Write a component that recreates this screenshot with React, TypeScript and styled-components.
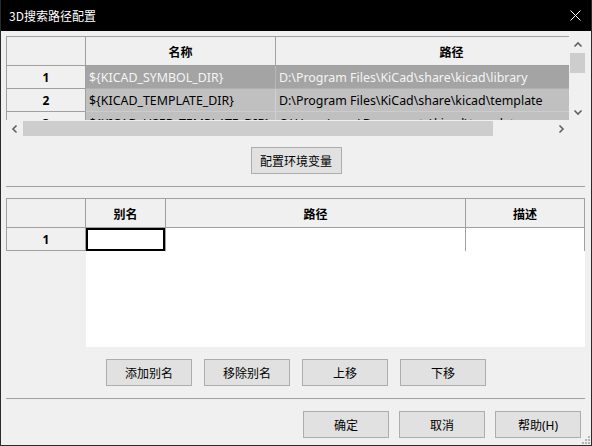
import styled, { createGlobalStyle } from "styled-components";

const GlobalStyle = createGlobalStyle`
  html, body {
    margin: 0;
    padding: 0;
    background: #f0f0f0;
  }
  body {
    font-family: "Noto Sans", "Noto Sans CJK SC", sans-serif;
    font-size: 12px;
    color: #000;
  }
`;

type PathRow = { name: string; path: string; selected?: boolean };

const envPaths: PathRow[] = [
  { name: "${KICAD_SYMBOL_DIR}", path: "D:\\Program Files\\KiCad\\share\\kicad\\library", selected: true },
  { name: "${KICAD_TEMPLATE_DIR}", path: "D:\\Program Files\\KiCad\\share\\kicad\\template" },
  { name: "${KICAD_USER_TEMPLATE_DIR}", path: "C:\\Users\\user\\Documents\\kicad\\template" },
];

const GRID_LINE = "#a0a0a0";

function Chevron({ dir }: { dir: "up" | "down" | "left" | "right" }) {
  const d = {
    up: "M1.5 5.5 L5 2 L8.5 5.5",
    down: "M1.5 2.5 L5 6 L8.5 2.5",
    left: "M5.5 1.5 L2 5 L5.5 8.5",
    right: "M2.5 1.5 L6 5 L2.5 8.5",
  }[dir];
  const vertical = dir === "up" || dir === "down";
  return (
    <svg width={vertical ? 10 : 8} height={vertical ? 8 : 10} viewBox={vertical ? "0 0 10 8" : "0 0 8 10"}>
      <path d={d} fill="none" stroke="#606060" strokeWidth="1.6" />
    </svg>
  );
}

function App() {
  return (
    <>
      <GlobalStyle />
      <Window>
        <TitleBar>
          <Title>3D搜索路径配置</Title>
          <CloseBox>
            <svg width="11" height="11" viewBox="0 0 11 11">
              <path d="M0.5 0.5 L10.5 10.5 M10.5 0.5 L0.5 10.5" stroke="#fff" strokeWidth="1" />
            </svg>
          </CloseBox>
        </TitleBar>

        <Body>
          <ScrollFrame>
            <Viewport>
              <Table $cols="79px 190px 352px">
                <HeadCell $label />
                <HeadCell>名称</HeadCell>
                <HeadCell>路径</HeadCell>
                {envPaths.map((row, i) => (
                  <RowFragment key={row.name} row={row} index={i + 1} />
                ))}
              </Table>
            </Viewport>
            <VScroll>
              <ArrowBox>
                <Chevron dir="up" />
              </ArrowBox>
              <VTrack>
                <VThumb />
              </VTrack>
              <ArrowBox>
                <Chevron dir="down" />
              </ArrowBox>
            </VScroll>
            <HScroll>
              <ArrowBox>
                <Chevron dir="left" />
              </ArrowBox>
              <HTrack>
                <HThumb />
              </HTrack>
              <ArrowBox>
                <Chevron dir="right" />
              </ArrowBox>
            </HScroll>
            <div />
          </ScrollFrame>

          <CenterRow $top={10}>
            <Button $width={91}>配置环境变量</Button>
          </CenterRow>

          <Separator $top={12} />

          <AliasGrid>
            <HeadCell $label $edge />
            <HeadCell>别名</HeadCell>
            <HeadCell>路径</HeadCell>
            <HeadCell>描述</HeadCell>
            <LabelCell $edge>1</LabelCell>
            <EditCell $current />
            <EditCell />
            <EditCell />
            <div />
            <EmptyArea />
          </AliasGrid>

          <CenterRow $top={12}>
            <Button>添加别名</Button>
            <Button>移除别名</Button>
            <Button>上移</Button>
            <Button>下移</Button>
          </CenterRow>

          <Separator $top={12} />

          <DialogButtons>
            <Button>确定</Button>
            <Button>取消</Button>
            <Button>帮助(H)</Button>
          </DialogButtons>
        </Body>

        <Grip>
          <svg width="8" height="8" viewBox="0 0 8 8">
            {[
              [6, 0],
              [3, 3],
              [6, 3],
              [0, 6],
              [3, 6],
              [6, 6],
            ].map(([x, y]) => (
              <rect key={`${x}-${y}`} x={x} y={y} width="2" height="2" fill="#b4b4b4" />
            ))}
          </svg>
        </Grip>
      </Window>
    </>
  );
}

function RowFragment({ row, index }: { row: PathRow; index: number }) {
  return (
    <>
      <LabelCell>{index}</LabelCell>
      <DataCell $selected={row.selected}>{row.name}</DataCell>
      <DataCell $selected={row.selected}>{row.path}</DataCell>
    </>
  );
}

const Window = styled.div`
  position: relative;
  width: 592px;
  height: 446px;
  box-sizing: border-box;
  border: 1px solid #2b2b2b;
  border-top: none;
  display: flex;
  flex-direction: column;
  background: #f0f0f0;
  overflow: hidden;
`;

const TitleBar = styled.div`
  height: 31px;
  flex: none;
  background: #000;
  color: #fff;
  display: flex;
  align-items: center;
  justify-content: space-between;
  padding-left: 8px;
`;

const Title = styled.span`
  font-family: "Noto Sans CJK SC", sans-serif;
  font-size: 12px;
  margin-top: -1px;
`;

const CloseBox = styled.div`
  width: 32px;
  height: 31px;
  display: flex;
  align-items: center;
  justify-content: center;
`;

const Body = styled.div`
  flex: 1;
  display: flex;
  flex-direction: column;
  padding: 5px 5px 7px;
`;

const ScrollFrame = styled.div`
  display: grid;
  grid-template-columns: 1fr 17px;
  grid-template-rows: 84px 17px;
`;

const Viewport = styled.div`
  overflow: hidden;
  background: #fff;
`;

const Table = styled.div<{ $cols: string }>`
  display: grid;
  grid-template-columns: ${(p) => p.$cols};
  grid-auto-rows: min-content;
  width: max-content;
  border-left: 1px solid ${GRID_LINE};
`;

const HeadCell = styled.div<{ $label?: boolean; $edge?: boolean }>`
  height: 28px;
  display: flex;
  align-items: center;
  justify-content: center;
  background: #f0f0f0;
  border-top: 1px solid ${GRID_LINE};
  border-right: 1px solid ${GRID_LINE};
  border-bottom: 1px solid ${GRID_LINE};
  border-left: ${(p) => (p.$edge ? `1px solid ${GRID_LINE}` : "none")};
  font-family: "Noto Sans CJK SC", sans-serif;
  font-weight: bold;
`;

const LabelCell = styled.div<{ $edge?: boolean }>`
  height: 22px;
  display: flex;
  align-items: center;
  justify-content: center;
  background: #f0f0f0;
  border-right: 1px solid ${GRID_LINE};
  border-bottom: 1px solid ${GRID_LINE};
  border-left: ${(p) => (p.$edge ? `1px solid ${GRID_LINE}` : "none")};
  font-weight: bold;
`;

const DataCell = styled.div<{ $selected?: boolean }>`
  height: 22px;
  display: flex;
  align-items: center;
  padding-left: 3px;
  font-size: 12.4px;
  white-space: nowrap;
  overflow: hidden;
  background: ${(p) => (p.$selected ? "#a4a4a4" : "#c0c0c0")};
  color: ${(p) => (p.$selected ? "#f4f4f4" : "#000")};
  border-right: 1px solid ${(p) => (p.$selected ? "#b8b8b8" : "#d0d0d0")};
  border-bottom: 1px solid ${(p) => (p.$selected ? "#b0b0b0" : "#cccccc")};
`;

const VScroll = styled.div`
  display: flex;
  flex-direction: column;
  background: #f0f0f0;
`;

const HScroll = styled.div`
  display: flex;
  background: #f0f0f0;
`;

const ArrowBox = styled.div`
  width: 17px;
  height: 17px;
  flex: none;
  display: flex;
  align-items: center;
  justify-content: center;
`;

const VTrack = styled.div`
  flex: 1;
  padding: 0 1px;
`;

const VThumb = styled.div`
  height: 20px;
  background: #cdcdcd;
`;

const HTrack = styled.div`
  flex: 1;
  padding: 1px 0;
`;

const HThumb = styled.div`
  width: 470px;
  height: 100%;
  background: #cdcdcd;
`;

const CenterRow = styled.div<{ $top: number }>`
  display: flex;
  justify-content: center;
  gap: 12px;
  margin-top: ${(p) => p.$top}px;
`;

const Button = styled.button<{ $width?: number }>`
  width: ${(p) => p.$width ?? 86}px;
  height: 27px;
  padding: 0;
  box-sizing: border-box;
  background: #e1e1e1;
  border: 1px solid #adadad;
  font-family: "Noto Sans", "Noto Sans CJK SC", sans-serif;
  font-size: 12px;
  color: #000;
`;

const Separator = styled.div<{ $top: number }>`
  height: 1px;
  margin-top: ${(p) => p.$top}px;
  margin-right: 1px;
  background: ${GRID_LINE};
`;

const AliasGrid = styled.div`
  margin-top: 11px;
  height: 149px;
  display: grid;
  grid-template-columns: 80px 80px 300px 119px;
  grid-template-rows: 30px 23px 1fr;
`;

const EditCell = styled.div<{ $current?: boolean }>`
  background: #fff;
  border-right: 1px solid ${GRID_LINE};
  box-shadow: ${(p) => (p.$current ? "inset 0 0 0 2px #000" : "none")};
`;

const EmptyArea = styled.div`
  grid-column: 2 / 5;
  background: #fff;
`;

const DialogButtons = styled.div`
  display: flex;
  justify-content: flex-end;
  gap: 10px;
  margin-top: 12px;
  padding-right: 5px;
`;

const Grip = styled.div`
  position: absolute;
  right: 1px;
  bottom: 1px;
  width: 8px;
  height: 8px;
  display: flex;
`;

export default App;
